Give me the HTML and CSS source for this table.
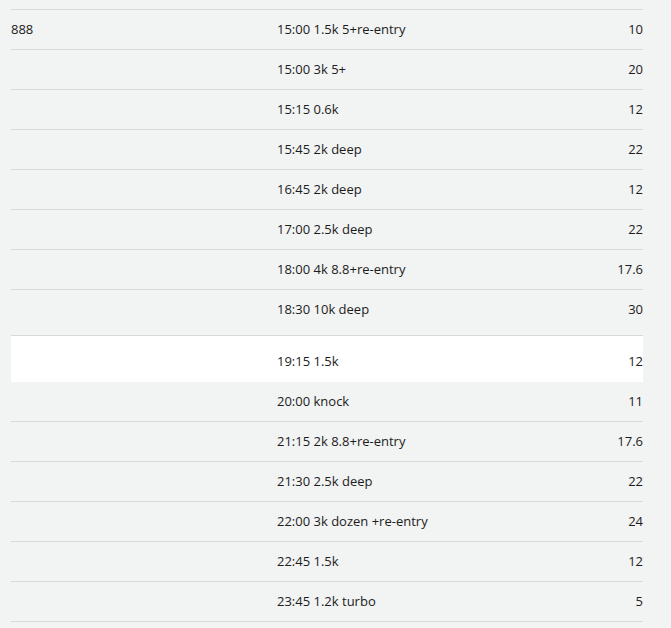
FILE: index.html
```html
<!DOCTYPE html>
<html>
<head>
<meta charset="utf-8">
<link rel="stylesheet" href="styles.css">
</head>
<body>
<div class="table">
  <div class="row"><div class="c1">888</div><div class="c2">15:00 1.5k 5+re-entry</div><div class="c3">10</div></div>
  <div class="row"><div class="c1"></div><div class="c2">15:00 3k 5+</div><div class="c3">20</div></div>
  <div class="row"><div class="c1"></div><div class="c2">15:15 0.6k</div><div class="c3">12</div></div>
  <div class="row"><div class="c1"></div><div class="c2">15:45 2k deep</div><div class="c3">22</div></div>
  <div class="row"><div class="c1"></div><div class="c2">16:45 2k deep</div><div class="c3">12</div></div>
  <div class="row"><div class="c1"></div><div class="c2">17:00 2.5k deep</div><div class="c3">22</div></div>
  <div class="row"><div class="c1"></div><div class="c2">18:00 4k 8.8+re-entry</div><div class="c3">17.6</div></div>
  <div class="row tall"><div class="c1"></div><div class="c2">18:30 10k deep</div><div class="c3">30</div></div>
  <div class="row highlight"><div class="c1"></div><div class="c2">19:15 1.5k</div><div class="c3">12</div></div>
  <div class="row"><div class="c1"></div><div class="c2">20:00 knock</div><div class="c3">11</div></div>
  <div class="row"><div class="c1"></div><div class="c2">21:15 2k 8.8+re-entry</div><div class="c3">17.6</div></div>
  <div class="row"><div class="c1"></div><div class="c2">21:30 2.5k deep</div><div class="c3">22</div></div>
  <div class="row"><div class="c1"></div><div class="c2">22:00 3k dozen +re-entry</div><div class="c3">24</div></div>
  <div class="row"><div class="c1"></div><div class="c2">22:45 1.5k</div><div class="c3">12</div></div>
  <div class="row"><div class="c1"></div><div class="c2">23:45 1.2k turbo</div><div class="c3">5</div></div>
</div>
</body>
</html>
```
FILE: styles.css
```css
html, body {
  margin: 0;
  background: #f2f3f3;
}
body {
  padding: 9px 28px 0 11px;
  font-family: "Open Sans", "Noto Sans", sans-serif;
  font-size: 13px;
  color: #1c1c1c;
}
.table {
  border-top: 1px solid #d3dadd;
}
.row {
  display: grid;
  grid-template-columns: 266px 1fr auto;
  line-height: 19px;
  padding: 10px 0;
  border-bottom: 1px solid #d3dadd;
}
.row.tall {
  padding-bottom: 16px;
}
.row.highlight {
  background: #ffffff;
  border-bottom: none;
  padding: 16px 0 11px;
}
.c3 {
  text-align: right;
}
```
